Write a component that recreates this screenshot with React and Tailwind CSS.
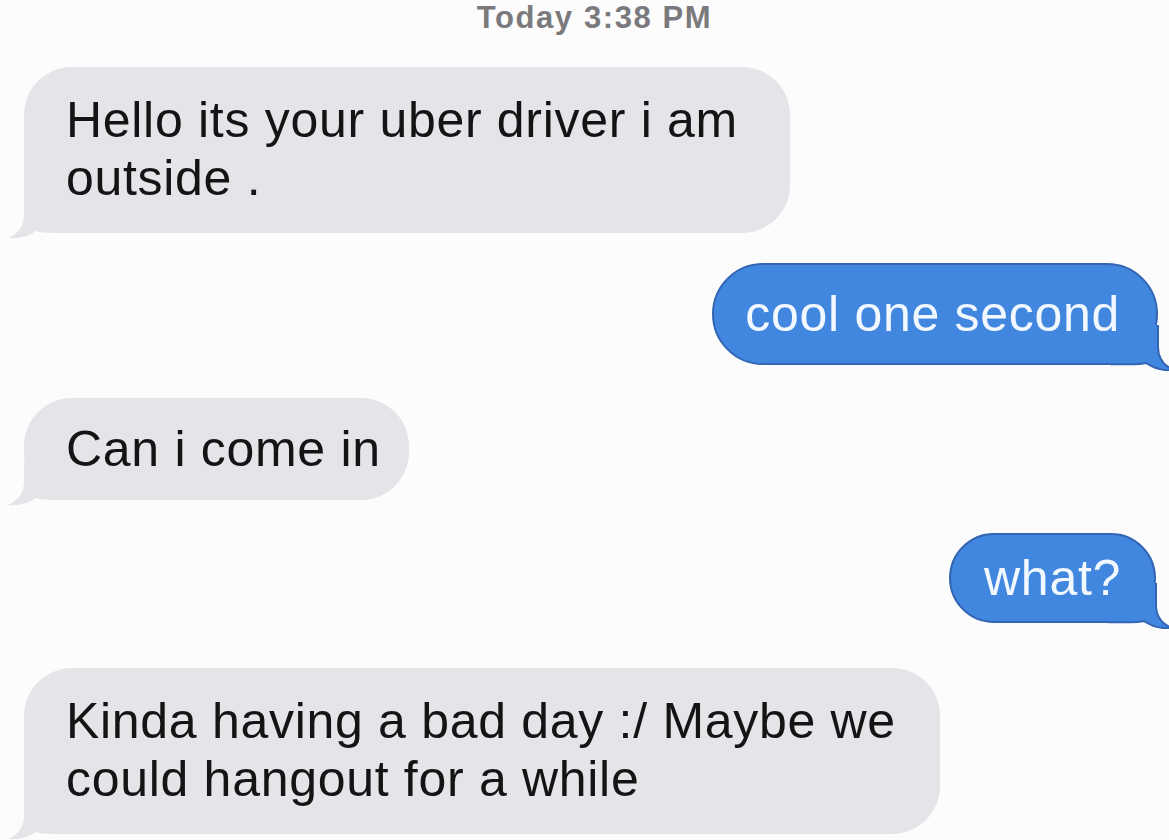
import React from "react";

function Tail({ color, stroke, side }) {
  const fill =
    "M16 0 L16 22 C16 33 10 41 0 45 C11 46 21 43 28 38 C34 40 44 40 64 40 L64 0 Z";
  const edge = "M16 0 L16 22 C16 33 10 41 0 45 C11 46 21 43 28 38 C34 40 44 39.2 64 39.2";
  const pos =
    side === "left"
      ? "absolute left-[-16px] bottom-[-6px]"
      : "absolute right-[-18px] bottom-[-8px] -scale-x-100";
  return (
    <svg width="64" height="46" viewBox="0 0 64 46" className={pos}>
      <path d={fill} fill={color} />
      {stroke && <path d={edge} fill="none" stroke={stroke} strokeWidth="2" />}
    </svg>
  );
}

function Gray({ children, className }) {
  return (
    <div
      className={
        "relative self-start ml-[24px] bg-[#e4e4e9] text-[#141414] rounded-[48px] text-[50px] leading-[58px] tracking-[0.7px] " +
        className
      }
    >
      <Tail color="#e4e4e9" side="left" />
      <div className="relative">{children}</div>
    </div>
  );
}

function Blue({ children, className }) {
  return (
    <div
      className={
        "relative self-end bg-[#4287df] border-2 border-[#3266b4] text-[#f2f8ff] rounded-[52px] text-[50px] leading-[58px] tracking-[0.7px] " +
        className
      }
    >
      <Tail color="#4287df" stroke="#3266b4" side="right" />
      <div className="relative">{children}</div>
    </div>
  );
}

export default function App() {
  return (
    <div className="w-[1169px] h-[840px] overflow-hidden bg-[#fcfcfc] flex flex-col font-['Liberation_Sans',Arial,Helvetica,sans-serif]">
      <div className="text-center pl-[20px] text-[31px] leading-[36px] tracking-[1.6px] font-semibold text-[#7a7a7c]">
        Today 3:38 PM
      </div>

      <Gray className="mt-[31px] w-[766px] pt-[24px] pb-[26px] pl-[42px] pr-[40px]">
        Hello its your uber driver i am
        <br />
        outside .
      </Gray>

      <Blue className="mt-[30px] mr-[11px] py-[20px] pl-[31px] pr-[36px]">
        cool one second
      </Blue>

      <Gray className="mt-[33px] py-[22px] pl-[42px] pr-[28px]">Can i come in</Gray>

      <Blue className="mt-[33px] mr-[13px] py-[14px] pl-[33px] pr-[33px]">what?</Blue>

      <Gray className="mt-[45px] w-[916px] pt-[24px] pb-[26px] pl-[42px] pr-[40px]">
        Kinda having a bad day :/ Maybe we
        <br />
        could hangout for a while
      </Gray>
    </div>
  );
}
